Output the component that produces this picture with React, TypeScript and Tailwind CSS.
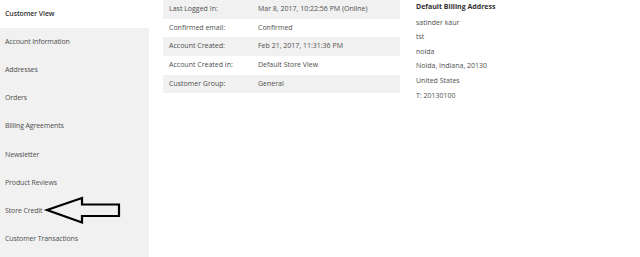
import React from "react";

const nav = [
  "Account Information",
  "Addresses",
  "Orders",
  "Billing Agreements",
  "Newsletter",
  "Product Reviews",
  "Store Credit",
  "Customer Transactions",
];

const rows: [string, string][] = [
  ["Last Logged In:", "Mar 8, 2017, 10:22:56 PM (Online)"],
  ["Confirmed email:", "Confirmed"],
  ["Account Created:", "Feb 21, 2017, 11:31:36 PM"],
  ["Account Created in:", "Default Store View"],
  ["Customer Group:", "General"],
];

const addr = ["satinder kaur", "tst", "noida", "Noida, Indiana, 20130", "United States", "T: 20130100"];

export default function App() {
  return (
    <div
      className="w-[640px] h-[257px] bg-white flex overflow-hidden text-[7px] text-[#4f4f4f]"
      style={{ fontFamily: '"Open Sans", sans-serif' }}
    >
      <div className="w-[149px] shrink-0 flex flex-col relative tracking-[-0.12px]">
        <div className="h-[28px] shrink-0 flex items-center pl-[5px] font-semibold text-[#303030]">Customer View</div>
        <div className="flex-1 bg-[#f1f1f1] flex flex-col">
          {nav.map((n) => (
            <div key={n} className="h-[28.2px] flex items-center pl-[5px] shrink-0">
              {n}
            </div>
          ))}
        </div>
        <svg className="absolute left-0 top-0" width="149" height="257">
          <polygon
            points="47,210 82,198 82,204.5 119,204.5 119,216 82,216 82,222.5"
            fill="none"
            stroke="#000"
            strokeWidth="2.2"
            strokeLinejoin="miter"
          />
        </svg>
      </div>
      <div className="w-[14px] shrink-0" />
      <div className="w-[237px] shrink-0 flex flex-col">
        {rows.map(([l, v], i) => (
          <div key={l} className={`h-[18.7px] flex items-center ${i % 2 === 0 ? "bg-[#f1f1f1]" : "bg-white"}`}>
            <div className="w-[95px] pl-[6px] shrink-0">{l}</div>
            <div>{v}</div>
          </div>
        ))}
      </div>
      <div className="pl-[16px] flex flex-col">
        <div className="h-[14.6px] flex items-center font-bold text-[#303030]">Default Billing Address</div>
        <div className="mt-[1px] flex flex-col">
          {addr.map((a) => (
            <div key={a} className="h-[14.6px] flex items-center">{a}</div>
          ))}
        </div>
      </div>
    </div>
  );
}
